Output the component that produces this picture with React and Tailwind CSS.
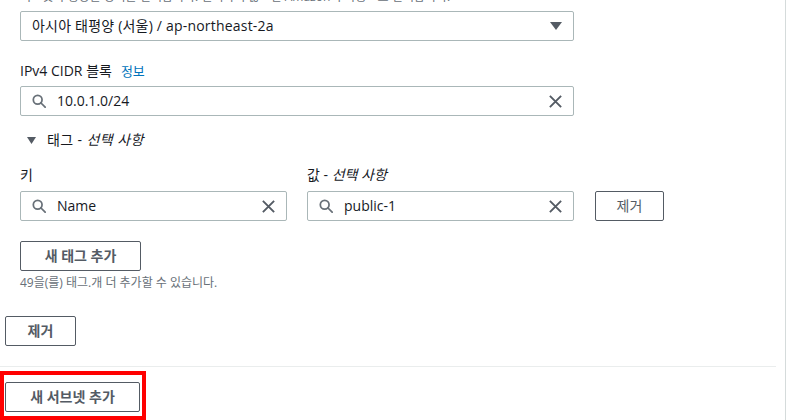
import React from "react";

const SearchIcon = () => (
  <svg width="14" height="14" viewBox="0 0 16 16" fill="none" stroke="#687078" strokeWidth="2">
    <circle cx="6.5" cy="6.5" r="5" />
    <path d="M10 10l5 5" strokeLinecap="round" />
  </svg>
);

const ClearIcon = () => (
  <svg width="15" height="15" viewBox="0 0 16 16" fill="none" stroke="#545b64" strokeWidth="2">
    <path d="M2 2l12 12M14 2L2 14" />
  </svg>
);

const SearchInput = ({ value, className }) => (
  <div className={`flex h-[30px] items-center rounded-[2px] border border-[#aab7b8] bg-white pl-[11px] pr-[10px] ${className}`}>
    <SearchIcon />
    <span className="ml-[11px] flex-1 text-[14px] leading-[20px] text-[#16191f]">{value}</span>
    <ClearIcon />
  </div>
);

const Button = ({ children, className, bold = true }) => (
  <button
    className={`h-[30px] rounded-[2px] border border-[#545b64] bg-white text-[14px] leading-[20px] text-[#545b64] ${bold ? "font-bold" : "font-normal"} ${className}`}
  >
    {children}
  </button>
);

export default function App() {
  return (
    <div
      className="relative h-[420px] w-[786px] overflow-hidden border-r border-[#d5dbdb] bg-white"
      style={{ fontFamily: '"Open Sans", "Noto Sans CJK KR", sans-serif' }}
    >
      <div className="pl-[5px]">
        <div className="pl-[15px] pr-[211px]">
          {/* Availability zone */}
          <p className="-mt-[11px] text-[12px] leading-[16px] text-[#687078]">
            서브넷이 생성될 영역을 선택합니다. 선택하지 않으면 Amazon이 자동으로 선택합니다.
          </p>
          <div className="mt-[6px] flex h-[30px] items-center justify-between rounded-[2px] border border-[#aab7b8] pl-[11px] pr-[11px]">
            <span className="text-[14px] leading-[20px] tracking-[0.2px] text-[#16191f]">아시아 태평양 (서울) / ap-northeast-2a</span>
            <svg width="12" height="8" viewBox="0 0 12 8">
              <path d="M0 0h12L6 8z" fill="#545b64" />
            </svg>
          </div>

          {/* CIDR */}
          <div className="mt-[19px] flex items-center text-[14px] leading-[22px] text-[#16191f]">
            <span>IPv4 CIDR 블록</span>
            <span className="ml-[9px] text-[13px] text-[#0073bb]">정보</span>
          </div>
          <SearchInput value="10.0.1.0/24" className="mt-[4px]" />

          {/* Tags */}
          <div className="mt-[13px] flex items-center pl-[7px] text-[14px] leading-[22px] text-[#16191f]">
            <svg width="9" height="7" viewBox="0 0 9 7">
              <path d="M0 0h9L4.5 7z" fill="#545b64" />
            </svg>
            <span className="ml-[11px] tracking-[0.4px]">
              태그 - <i>선택 사항</i>
            </span>
          </div>
        </div>

        <div className="pl-[15px]">
          <div className="mt-[13px] flex items-end">
            <div className="w-[267px]">
              <div className="text-[14px] leading-[22px] text-[#16191f]">키</div>
              <SearchInput value="Name" className="mt-[5px]" />
            </div>
            <div className="ml-[20px] w-[267px]">
              <div className="text-[14px] leading-[22px] text-[#16191f]">
                값 - <i>선택 사항</i>
              </div>
              <SearchInput value="public-1" className="mt-[5px]" />
            </div>
            <Button bold={false} className="ml-[21px] w-[69px]">제거</Button>
          </div>

          <Button className="mt-[20px] w-[121px]">새 태그 추가</Button>
          <p className="mt-[4px] text-[12px] leading-[16px] text-[#687078]">
            49을(를) 태그.개 더 추가할 수 있습니다.
          </p>
        </div>

        <Button className="mt-[25px] w-[71px]">제거</Button>
      </div>

      <div className="mt-[20px] w-[776px] border-t border-[#eaeded]" />

      <div className="pl-[5px] pt-[15px]">
        <Button className="w-[135px]">새 서브넷 추가</Button>
      </div>

      {/* annotation highlight */}
      <div className="absolute left-0 top-[371px] h-[49px] w-[146px] border-[4px] border-[#ff0000]" />
    </div>
  );
}
